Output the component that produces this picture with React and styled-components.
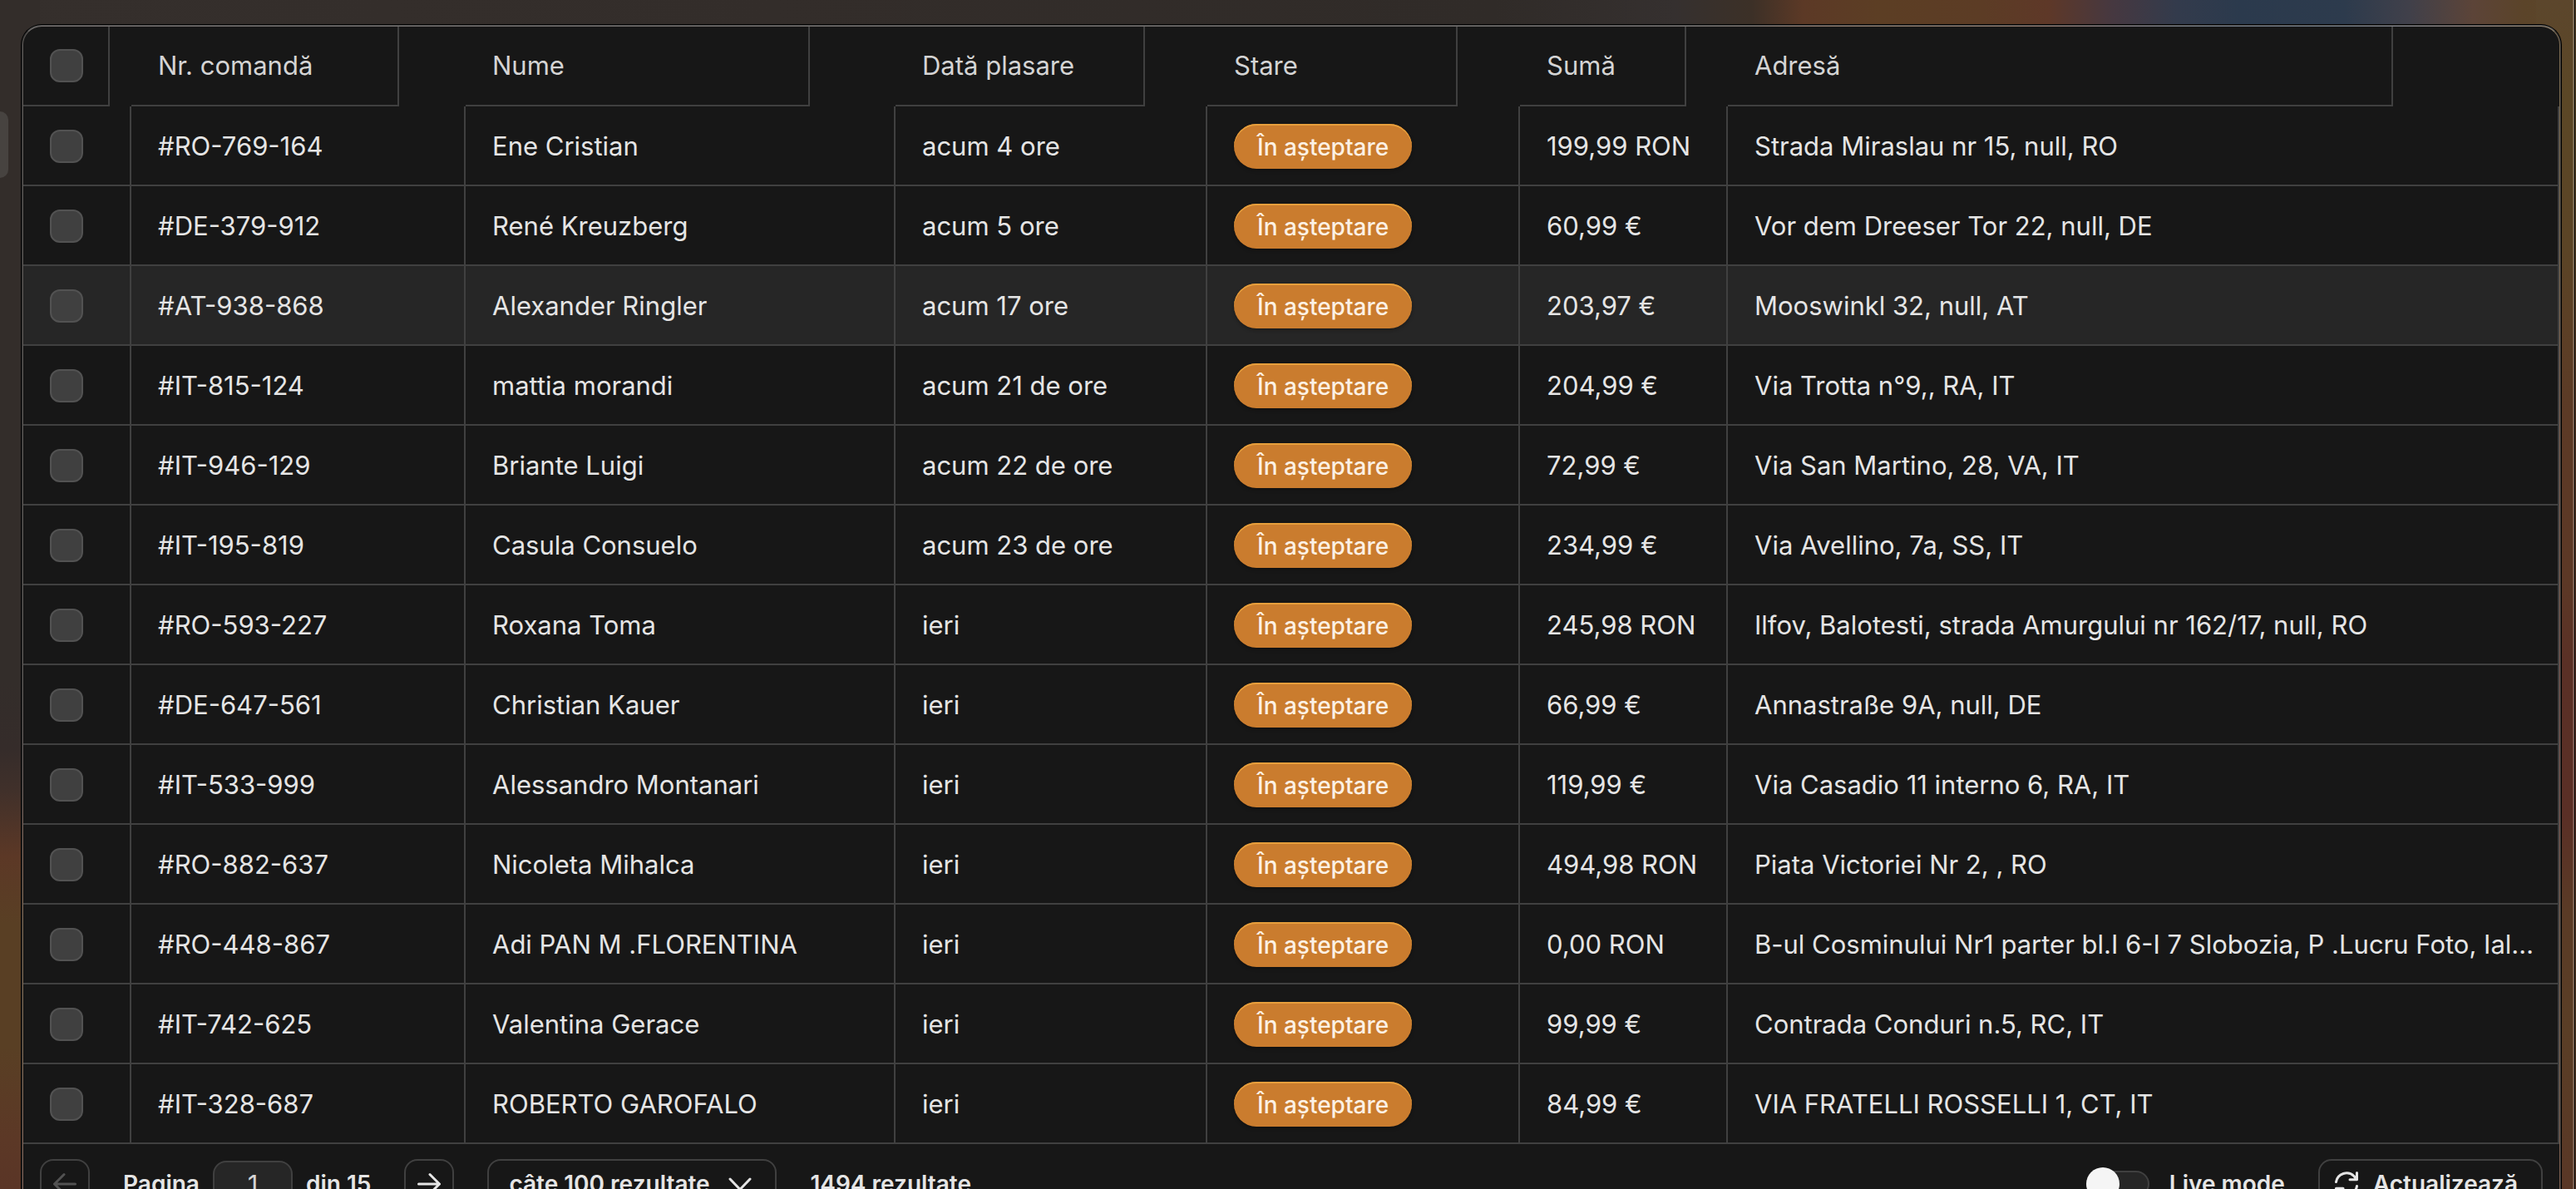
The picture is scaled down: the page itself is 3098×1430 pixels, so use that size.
import React, { useState } from "react";
import styled, { createGlobalStyle } from "styled-components";

const GlobalStyle = createGlobalStyle`
  *, *::before, *::after { box-sizing: border-box; }
  html, body { margin: 0; height: 100%; overflow: hidden; }
  #root { height: 100%; }
  body {
    background: #332d2a;
    color: #e5e5e5;
    font-family: Inter, "Noto Sans", "Liberation Sans", sans-serif;
    font-size: 31px;
    line-height: 40px;
  }
  button, input, select { font: inherit; color: inherit; margin: 0; }
`;

const line = "#404040";

const Page = styled.div`
  min-height: 100%;
  padding-right: 2px;
  background:
    linear-gradient(180deg, #332d2a 0, #332d2a 820px, #352c2a 900px, #40302a 950px, #5c3826 1030px, #593f24 1110px, #593f24 1260px, #5c3826 1370px, #5a3526 1430px) left top / 48px 100% no-repeat,
    linear-gradient(180deg, #5c462c 0, #5b4726 120px, #5b4426 300px, #5c3a26 500px, #5c3826 700px, #5a3026 800px, #5a2f26 980px, #5a3b26 1100px, #5a3e26 1240px, #593726 1430px) right top / 48px 100% no-repeat,
    linear-gradient(90deg, #352f2c 0, #332d2a 30%, #302b28 58%, #35302f 65%, #3c3027 68%, #5c3926 70%, #5c3e24 73%, #5c3c25 77%, #5e3828 79.5%, #463840 82%, #333b4c 84.5%, #2b3a4d 87%, #2d3b4d 91%, #40404a 93.5%, #5c4438 96%, #5b4429 98%, #5c462c 100%) left top / 100% 60px no-repeat,
    #332d2a;
`;

const Shell = styled.main`
  padding: 30px 14px 24px 0;
  border-right: 2px solid rgba(255, 255, 255, 0.2);
  box-shadow: 1px 0 0 #000;
  display: flex;
  align-items: flex-start;
`;

const SidebarHandle = styled.button`
  flex: none;
  width: 10px;
  height: 80px;
  margin: 104px 16px 0 0;
  padding: 0;
  border: 0;
  border-radius: 0 10px 10px 0;
  background: #474340;
`;

const Panel = styled.section`
  flex: 1;
  min-width: 0;
  overflow: hidden;
  border: 2px solid rgba(255, 255, 255, 0.2);
  border-top-color: rgba(255, 255, 255, 0.32);
  border-radius: 24px;
  background: #171717 padding-box;
  box-shadow: 0 0 0 1px #000;
`;

const Table = styled.table`
  width: 100%;
  table-layout: fixed;
  border-collapse: separate;
  border-spacing: 0;
`;

const Col = styled.col`
  width: ${(p) => (p.$width ? `${p.$width}px` : "auto")};
`;

const HeadCell = styled.th`
  padding: 0;
  text-align: left;
  font-weight: 400;
  color: #d4d4d4;
`;

const HeadLabel = styled.div`
  display: flex;
  align-items: center;
  width: 80%;
  height: 96px;
  padding-left: 32px;
  border: solid ${line};
  border-width: 0 2px 2px 0;
  white-space: nowrap;
`;

const Row = styled.tr`
  background: ${(p) => (p.$active ? "#262626" : "transparent")};
`;

const Cell = styled.td`
  height: 96px;
  padding: 2px 16px 0 32px;
  border: solid ${line};
  border-width: 0 2px 2px 0;
  vertical-align: middle;
  overflow: hidden;
  text-overflow: ellipsis;
  white-space: nowrap;
`;

const Checkbox = styled.input.attrs({ type: "checkbox" })`
  appearance: none;
  display: block;
  width: 40px;
  height: 40px;
  border: 2px solid #525252;
  border-radius: 12px;
  background: #404040;
  &:checked { background: #ca7c2e; }
`;

const Badge = styled.span`
  display: flex;
  align-items: center;
  width: fit-content;
  height: 54px;
  padding: 2px 28px 0;
  border-radius: 27px;
  background: #ca7c2e;
  box-shadow: inset 0 2px 0 #e79f3c, 0 2px 4px rgba(0, 0, 0, 0.3);
  color: #fcf1e4;
  font-size: 28px;
  font-weight: 500;
`;

const Footer = styled.footer`
  display: flex;
  align-items: center;
  justify-content: space-between;
  padding: 18px 20px;
  font-size: 28px;
  font-weight: 600;
  white-space: nowrap;
`;

const Group = styled.div`
  display: flex;
  align-items: center;
  gap: ${(p) => p.$gap}px;
`;

const Button = styled.button`
  display: flex;
  align-items: center;
  justify-content: center;
  gap: 16px;
  height: 60px;
  padding: 0;
  border: 2px solid ${line};
  border-radius: 16px;
  background: transparent;
  &:disabled { color: #525252; }
`;

const IconButton = styled(Button)`
  width: 60px;
`;

const RefreshButton = styled(Button)`
  padding: 0 28px 0 16px;
`;

const PageInput = styled.input`
  width: 96px;
  height: 56px;
  padding: 0;
  border: 2px solid ${line};
  border-radius: 16px;
  background: #262626;
  color: #d4d4d4;
  font-size: 31px;
  font-weight: 400;
  text-align: center;
`;

const SelectBox = styled.div`
  display: grid;
  align-items: center;
  > * { grid-area: 1 / 1; }
  > svg { justify-self: end; margin-right: 30px; pointer-events: none; }
`;

const Select = styled.select`
  appearance: none;
  height: 60px;
  padding: 0 78px 0 24px;
  border: 2px solid ${line};
  border-radius: 16px;
  background: transparent;
  option { background: #171717; }
`;

const Switch = styled.input.attrs({ type: "checkbox", role: "switch" })`
  appearance: none;
  display: flex;
  align-items: center;
  width: 76px;
  height: 32px;
  border: 2px solid ${line};
  border-radius: 16px;
  background: #262626;
  &::before {
    content: "";
    flex: none;
    width: 40px;
    height: 40px;
    margin-left: -2px;
    border-radius: 50%;
    background: #f5f5f5;
  }
  &:checked { justify-content: flex-end; }
`;

const Svg = styled.svg`
  flex: none;
  display: block;
  fill: none;
  stroke: currentColor;
  stroke-width: 3;
  stroke-linecap: round;
  stroke-linejoin: round;
`;

const ArrowLeft = () => (
  <Svg width="32" height="32" viewBox="0 0 32 32" aria-hidden="true">
    <path d="M28.500 16H3.500M15 4.500 3.500 16 15 27.500" />
  </Svg>
);

const ArrowRight = () => (
  <Svg width="32" height="32" viewBox="0 0 32 32" aria-hidden="true">
    <path d="M3.500 16h25M17 4.500 28.500 16 17 27.500" />
  </Svg>
);

const Chevron = () => (
  <Svg width="28" height="28" viewBox="0 0 28 28" aria-hidden="true">
    <path d="M2 8l12 12.500L26 8" />
  </Svg>
);

const Refresh = () => (
  <Svg width="32" height="32" viewBox="0 0 32 32" aria-hidden="true">
    <path d="M28.500 2.500v8.200H20M3.500 13.500A12.800 12.800 0 0 1 25 6.500l3.500 4.200" />
    <path d="M3.500 29.500v-8.200H12M28.500 18.500A12.800 12.800 0 0 1 7 25.500l-3.500-4.200" />
  </Svg>
);

const columns = [
  { label: "Nr. comandă", width: 402 },
  { label: "Nume", width: 517 },
  { label: "Dată plasare", width: 375 },
  { label: "Stare", width: 376 },
  { label: "Sumă", width: 250 },
  { label: "Adresă" },
];

const orders = [
  ["#RO-769-164", "Ene Cristian", "acum 4 ore", "199,99 RON", "Strada Miraslau nr 15, null, RO"],
  ["#DE-379-912", "René Kreuzberg", "acum 5 ore", "60,99 €", "Vor dem Dreeser Tor 22, null, DE"],
  ["#AT-938-868", "Alexander Ringler", "acum 17 ore", "203,97 €", "Mooswinkl 32, null, AT"],
  ["#IT-815-124", "mattia morandi", "acum 21 de ore", "204,99 €", "Via Trotta n°9,, RA, IT"],
  ["#IT-946-129", "Briante Luigi", "acum 22 de ore", "72,99 €", "Via San Martino, 28, VA, IT"],
  ["#IT-195-819", "Casula Consuelo", "acum 23 de ore", "234,99 €", "Via Avellino, 7a, SS, IT"],
  ["#RO-593-227", "Roxana Toma", "ieri", "245,98 RON", "Ilfov, Balotesti, strada Amurgului nr 162/17, null, RO"],
  ["#DE-647-561", "Christian Kauer", "ieri", "66,99 €", "Annastraße 9A, null, DE"],
  ["#IT-533-999", "Alessandro Montanari", "ieri", "119,99 €", "Via Casadio 11 interno 6, RA, IT"],
  ["#RO-882-637", "Nicoleta Mihalca", "ieri", "494,98 RON", "Piata Victoriei Nr 2, , RO"],
  ["#RO-448-867", "Adi PAN M .FLORENTINA", "ieri", "0,00 RON", "B-ul Cosminului Nr1 parter bl.I 6-I 7 Slobozia, P .Lucru Foto, Ialomita, RO"],
  ["#IT-742-625", "Valentina Gerace", "ieri", "99,99 €", "Contrada Conduri n.5, RC, IT"],
  ["#IT-328-687", "ROBERTO GAROFALO", "ieri", "84,99 €", "VIA FRATELLI ROSSELLI 1, CT, IT"],
];

export default function App() {
  const [page, setPage] = useState("1");

  return (
    <>
      <GlobalStyle />
      <Page>
        <Shell>
          <SidebarHandle aria-label="Meniu" />
          <Panel>
            <Table>
              <colgroup>
                <Col $width={130} />
                {columns.map((c) => (
                  <Col key={c.label} $width={c.width} />
                ))}
              </colgroup>
              <thead>
                <tr>
                  <HeadCell>
                    <HeadLabel>
                      <Checkbox aria-label="Selectează toate" />
                    </HeadLabel>
                  </HeadCell>
                  {columns.map((c) => (
                    <HeadCell key={c.label} scope="col">
                      <HeadLabel>{c.label}</HeadLabel>
                    </HeadCell>
                  ))}
                </tr>
              </thead>
              <tbody>
                {orders.map(([id, name, placed, amount, address], i) => (
                  <Row key={id} $active={i === 2}>
                    <Cell>
                      <Checkbox aria-label={`Selectează ${id}`} />
                    </Cell>
                    <Cell>{id}</Cell>
                    <Cell>{name}</Cell>
                    <Cell>{placed}</Cell>
                    <Cell>
                      <Badge>În așteptare</Badge>
                    </Cell>
                    <Cell>{amount}</Cell>
                    <Cell>{address}</Cell>
                  </Row>
                ))}
              </tbody>
            </Table>
            <Footer>
              <Group $gap={40}>
                <IconButton disabled aria-label="Pagina anterioară">
                  <ArrowLeft />
                </IconButton>
                <Group $gap={16}>
                  <label htmlFor="page">Pagina</label>
                  <PageInput id="page" value={page} onChange={(e) => setPage(e.target.value)} />
                  <span>din 15</span>
                </Group>
                <IconButton aria-label="Pagina următoare">
                  <ArrowRight />
                </IconButton>
                <SelectBox>
                  <Select aria-label="Rezultate pe pagină">
                    <option>câte 100 rezultate</option>
                  </Select>
                  <Chevron />
                </SelectBox>
                <span>1494 rezultate</span>
              </Group>
              <Group $gap={40}>
                <Group $gap={24}>
                  <Switch id="live" />
                  <label htmlFor="live">Live mode</label>
                </Group>
                <RefreshButton>
                  <Refresh />
                  Actualizează
                </RefreshButton>
              </Group>
            </Footer>
          </Panel>
        </Shell>
      </Page>
    </>
  );
}
